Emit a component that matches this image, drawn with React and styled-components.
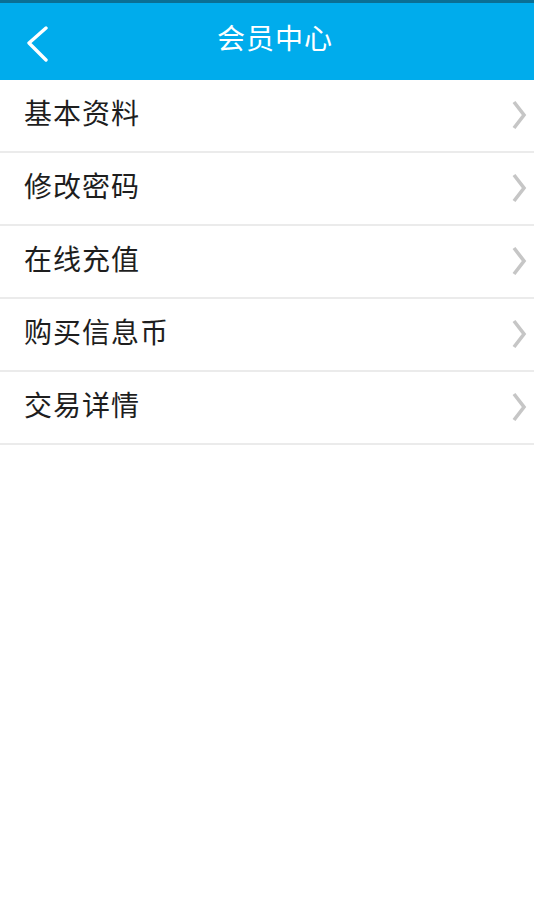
import styled, { createGlobalStyle } from "styled-components";

const GlobalStyle = createGlobalStyle`
    html, body {
        margin: 0;
        padding: 0;
        background: #ffffff;
    }
    body {
        font-family: "Noto Sans CJK SC", "Noto Sans", sans-serif;
    }
`;

const Page = styled.div`
    width: 534px;
    min-height: 910px;
    background: #ffffff;
`;

const Header = styled.div`
    height: 77px;
    border-top: 3px solid #0b6f94;
    background: #00acec;
    display: flex;
    align-items: center;
    justify-content: center;
    position: relative;
`;

const BackButton = styled.div`
    position: absolute;
    left: 25px;
    top: 21px;
    width: 24px;
    height: 38px;
    display: flex;
`;

const Title = styled.span`
    color: #ffffff;
    font-size: 28px;
    letter-spacing: 1px;
    line-height: 1;
    margin: 0 0 10px 16px;
`;

const MenuList = styled.div`
    display: flex;
    flex-direction: column;
`;

const MenuItem = styled.div`
    height: 71px;
    border-bottom: 2px solid #ebebeb;
    display: flex;
    align-items: center;
    justify-content: space-between;
    padding: 0 7px 0 24px;
`;

const Label = styled.span`
    color: #1e1e1e;
    font-size: 28px;
    line-height: 1;
    letter-spacing: 1px;
    margin-bottom: 7px;
`;

const Arrow = styled.svg`
    width: 16px;
    height: 30px;
    margin-bottom: 1px;
`;

const BackIcon = () => (
    <svg width="24" height="38" viewBox="0 0 24 38">
        <polyline points="21,4 4,19 21,36" fill="none" stroke="#ffffff" strokeWidth="3.4" strokeLinecap="round" strokeLinejoin="round" />
    </svg>
)

const ChevronRight = () => (
    <Arrow viewBox="0 0 16 30">
        <polyline points="3,2 13,15 3,28" fill="none" stroke="#c6c6c6" strokeWidth="3.6" strokeLinejoin="miter" />
    </Arrow>
)

const items = ["基本资料", "修改密码", "在线充值", "购买信息币", "交易详情"];

const App = () => {
    return (
        <Page>
            <GlobalStyle />
            <Header>
                <BackButton>
                    <BackIcon />
                </BackButton>
                <Title>会员中心</Title>
            </Header>
            <MenuList>
                {items.map((item, index) => {
                    return (
                        <MenuItem key={index}>
                            <Label>{item}</Label>
                            <ChevronRight />
                        </MenuItem>
                    )
                })}
            </MenuList>
        </Page>
    );
}

export default App;
